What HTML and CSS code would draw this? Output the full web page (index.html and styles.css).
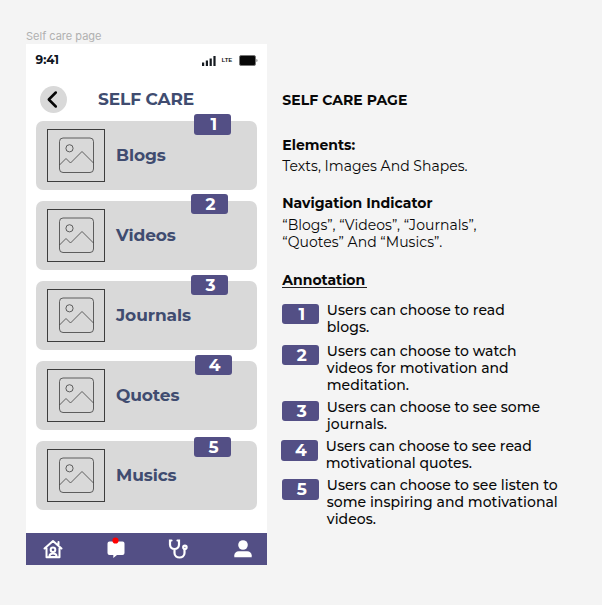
FILE: index.html
```html
<!DOCTYPE html>
<html lang="en">
<head>
<meta charset="utf-8">
<title>Self care page</title>
<link rel="stylesheet" href="styles.css">
</head>
<body>
<svg class="defs" aria-hidden="true">
  <symbol id="picture" viewBox="0 0 58 53">
    <rect x=".5" y=".5" width="57" height="52"/>
    <rect x="12.500" y="9" width="34" height="34.500" rx="3.500" stroke-width=".8"/>
    <circle cx="22.500" cy="19.300" r="3.600" stroke-width=".8"/>
    <path d="M12.500 36l6.500-6.500 4.500 4.500 11.500-11.500 11.500 11.500" stroke-width=".8"/>
  </symbol>
</svg>
<div class="board">
  <section class="frame">
    <div class="frame-name">Self care page</div>
    <div class="phone">
      <div class="status">
        <span class="time">9:41</span>
        <svg class="signal" viewBox="0 0 14 10"><path d="M0 6.500h2.200V10H0zM3.800 4.500H6V10H3.800zM7.600 2.500h2.200V10H7.600zM11.400 0h2.200v10h-2.200z"/></svg>
        <span class="lte">LTE</span>
        <svg class="battery" viewBox="0 0 19 11"><rect x=".5" y=".5" width="16" height="10" rx="1.500" fill="#080808" stroke="#777"/><path d="M17.500 4v3c1.200-.5 1.200-2.500 0-3z" fill="#555"/></svg>
      </div>
      <header class="title">
        <span class="back"><svg viewBox="0 0 27 27"><path d="M15.800 6.500L8.800 13.500l7 7"/></svg></span>
        <h1>SELF CARE</h1>
      </header>
      <div class="cards">
        <div class="card"><svg class="picture"><use href="#picture"/></svg><span class="label">Blogs</span><b class="badge pin p1">1</b></div>
        <div class="card"><svg class="picture"><use href="#picture"/></svg><span class="label">Videos</span><b class="badge pin p2">2</b></div>
        <div class="card"><svg class="picture"><use href="#picture"/></svg><span class="label">Journals</span><b class="badge pin p3">3</b></div>
        <div class="card"><svg class="picture"><use href="#picture"/></svg><span class="label">Quotes</span><b class="badge pin p4">4</b></div>
        <div class="card"><svg class="picture"><use href="#picture"/></svg><span class="label">Musics</span><b class="badge pin p5">5</b></div>
      </div>
      <nav class="tabs">
        <svg viewBox="0 0 20 20"><g fill="none" stroke="#fff" stroke-width="2" stroke-linejoin="round" stroke-linecap="round"><path d="M1.500 9.500L10 2l8.500 7.500M15.500 3v3M3.500 9v9.300h13V9"/><circle cx="10" cy="10.800" r="2.300"/><path d="M6.500 18v-1c0-3.500 7-3.500 7 0v1z"/></g></svg>
        <svg viewBox="0 0 20 20"><path d="M3 2.500h13.500q2 0 2 2v9.500q0 2-2 2H11l-3.700 3V16H3.500q-2 0-2-2V4.500q0-2 2-2z" fill="#fff"/><circle cx="9.500" cy="1.500" r="3.100" fill="#f00"/></svg>
        <svg class="steth" viewBox="0 0 20 20"><g fill="none" stroke="#fff" stroke-width="2.200" stroke-linecap="round"><path d="M3.500 1.500H2v4c0 6 9 6 9 0v-4H9.500M6.500 10.500V14c0 6 10 6 10 0v-4"/><circle cx="16.900" cy="8.300" r="1.700"/></g></svg>
        <svg viewBox="0 0 20 20"><circle cx="10" cy="6" r="4.800" fill="#fff"/><path d="M1.300 18.200v-2c0-2.300 2-4 4.500-4h8.400c2.500 0 4.500 1.700 4.500 4v2z" fill="#fff"/></svg>
      </nav>
    </div>
  </section>
  <section class="notes">
    <h2 class="page-title">SELF CARE PAGE</h2>
    <h3 class="h-elements">Elements:</h3>
    <p class="elements">Texts, Images And Shapes.</p>
    <h3 class="h-nav">Navigation Indicator</h3>
    <p class="nav-text">“Blogs”, “Videos”, “Journals”,<br>“Quotes” And “Musics”.</p>
    <h3 class="h-annotation">Annotation</h3>
    <ol class="list">
      <li class="n1"><b class="badge">1</b><p>Users can choose to read<br>blogs.</p></li>
      <li class="n2"><b class="badge">2</b><p>Users can choose to watch<br>videos for motivation and<br>meditation.</p></li>
      <li class="n3"><b class="badge">3</b><p>Users can choose to see some<br>journals.</p></li>
      <li class="n4"><b class="badge">4</b><p>Users can choose to see read<br>motivational quotes.</p></li>
      <li class="n5"><b class="badge">5</b><p>Users can choose to see listen to<br>some inspiring and motivational<br>videos.</p></li>
    </ol>
  </section>
</div>
</body>
</html>
```
FILE: styles.css
```css
* { box-sizing: border-box; margin: 0; padding: 0; }
body { background: #f4f4f4; color: #080808; font-family: Montserrat, Inter, sans-serif; font-size: 14px; line-height: 17px; white-space: nowrap; }
.defs { position: absolute; width: 0; height: 0; }
.board { display: flex; height: 605px; padding-left: 26px; overflow: hidden; }
.frame { width: 241px; }
.frame-name { height: 44px; padding-top: 28px; font: 400 11px/16px Inter, sans-serif; color: #b0b0b0; }
.phone { display: flex; flex-direction: column; height: 521px; background: #fff; }
.status { display: flex; align-items: center; height: 33px; padding-left: 9.500px; }
.time { width: 166.500px; margin-top: -3px; font-size: 12px; font-weight: 700; color: #10151f; }
.signal { flex: none; width: 14px; height: 10px; fill: #151a20; }
.lte { width: 23px; padding-left: 5.500px; font-size: 6px; font-weight: 600; }
.battery { flex: none; width: 19px; height: 11px; }
.title { display: flex; align-items: center; height: 44px; padding-left: 14px; }
.back { width: 27px; height: 27px; border-radius: 50%; background: #d9d9d9; }
.back svg { display: block; width: 27px; height: 27px; fill: none; stroke: #050505; stroke-width: 2.500; stroke-linecap: round; stroke-linejoin: round; }
h1 { margin-left: 31px; font-size: 17px; line-height: 22px; font-weight: 700; letter-spacing: -.12px; color: #404c70; }
.cards { display: flex; flex-direction: column; gap: 10.800px; padding: 0 10px; }
.card { position: relative; display: flex; align-items: center; height: 69.200px; padding: 0 0 1px 11px; border-radius: 7px; background: #d9d9d9; }
.picture { width: 58px; height: 53px; fill: none; stroke: #3d3d3d; }
.label { margin-left: 11px; font-size: 17px; line-height: 22px; font-weight: 700; letter-spacing: -.1px; color: #404c70; }
.badge { display: block; width: 37px; height: 20.500px; padding-left: 2px; border-radius: 3px; background: #534f85; color: #fff; font-size: 17px; line-height: 21px; font-weight: 700; text-align: center; }
.pin { position: absolute; }
.p1 { left: 158.300px; top: -7px; }
.p2 { left: 155px; top: -7px; }
.p3 { left: 155px; top: -6px; }
.p4 { left: 159px; top: -6px; }
.p5 { left: 158px; top: -4px; }
.tabs { display: flex; justify-content: space-between; align-items: center; height: 32px; margin-top: auto; padding: 0 14px 0 16.500px; background: #534f85; }
.tabs svg { width: 20px; height: 20px; overflow: visible; }
.tabs .steth { margin: 0 2px 0 -2px; }
.notes { padding: 92px 0 0 15.300px; }
h2, h3 { font-size: 14px; font-weight: 700; line-height: 17px; }
.page-title { letter-spacing: .05px; }
.h-elements { margin-top: 28px; }
.elements { margin-top: 3.500px; letter-spacing: .02px; }
.h-nav { margin-top: 20.500px; }
.nav-text { margin-top: 4.500px; letter-spacing: .03px; }
.h-annotation { width: 85px; height: 16px; margin-top: 21px; border-bottom: 1px solid #222; }
.list { list-style: none; font-weight: 500; letter-spacing: .02px; }
.list li { display: flex; }
.list p { margin-left: 7.500px; }
.n1 { margin-top: 14px; }
.n2 { margin-top: 7px; }
.n3 { margin-top: 5px; }
.n4 { margin: 5.500px 0 0 -1px; }
.n5 { margin-top: 5px; }
.list .badge { margin-top: 2px; }
```
